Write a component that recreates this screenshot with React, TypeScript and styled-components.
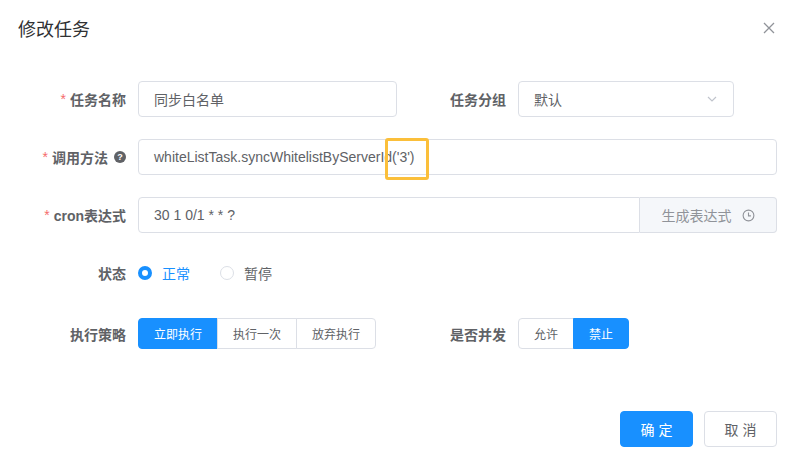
import React, { FC } from 'react';
import styled, { createGlobalStyle } from 'styled-components';

const Global = createGlobalStyle`
  body { margin: 0; background: #fff; font-family: "Liberation Sans", "Noto Sans CJK SC", sans-serif; }
`;

const App: FC = () => {
  return (
    <Dialog>
      <Global />
      <Header>
        <Title>修改任务</Title>
        <Close>
          <svg width="12" height="12" viewBox="0 0 12 12">
            <path d="M1 1L11 11M11 1L1 11" stroke="#909399" strokeWidth="1.3" />
          </svg>
        </Close>
      </Header>
      <Body>
        <Row>
          <Label $required>任务名称</Label>
          <Input $w={259}>同步白名单</Input>
          <Label $w={121}>任务分组</Label>
          <Input $w={216}>
            默认
            <svg width="12" height="12" viewBox="0 0 12 12" style={{ marginLeft: 'auto' }}>
              <path d="M2 4L6 8L10 4" stroke="#c0c4cc" strokeWidth="1.2" fill="none" />
            </svg>
          </Input>
        </Row>
        <Row>
          <Label $required>
            调用方法 <Help>?</Help>
          </Label>
          <Input $grow>
            whiteListTask.syncWhitelistByServerId('3')
            <Highlight />
          </Input>
        </Row>
        <Row>
          <Label $required>cron表达式</Label>
          <Input $grow $append>30 1 0/1 * * ?</Input>
          <Append>
            生成表达式
            <svg width="13" height="13" viewBox="0 0 14 14">
              <circle cx="7" cy="7" r="5.8" stroke="#909399" strokeWidth="1.2" fill="none" />
              <path d="M7 3.8V7.4H9.6" stroke="#909399" strokeWidth="1.2" fill="none" />
            </svg>
          </Append>
        </Row>
        <Row $h={36}>
          <Label>状态</Label>
          <Radio $on>正常</Radio>
          <Radio>暂停</Radio>
        </Row>
        <Row $h={31} $mt={5}>
          <Label>执行策略</Label>
          <Group>
            <SegBtn $on>立即执行</SegBtn>
            <SegBtn>执行一次</SegBtn>
            <SegBtn>放弃执行</SegBtn>
          </Group>
          <Label $w={142}>是否并发</Label>
          <Group>
            <SegBtn>允许</SegBtn>
            <SegBtn $on>禁止</SegBtn>
          </Group>
        </Row>
      </Body>
      <Footer>
        <Btn $primary>确 定</Btn>
        <Btn>取 消</Btn>
      </Footer>
    </Dialog>
  );
};

const Dialog = styled.div`
  width: 793px;
  height: 465px;
  display: flex;
  flex-direction: column;
  box-sizing: border-box;
`;

const Header = styled.div`
  display: flex;
  align-items: center;
  justify-content: space-between;
  padding: 14px 18px 0 18px;
  height: 28px;
`;

const Title = styled.div`
  font-size: 18px;
  color: #303133;
`;

const Close = styled.div`
  display: flex;
`;

const Body = styled.div`
  display: flex;
  flex-direction: column;
  gap: 22px;
  padding: 39px 16px 0 20px;
`;

const Row = styled.div<{ $h?: number; $mt?: number }>`
  display: flex;
  align-items: center;
  height: ${({ $h }) => $h ?? 36}px;
  margin-top: ${({ $mt }) => $mt ?? 0}px;
`;

const Label = styled.div<{ $required?: boolean; $w?: number }>`
  width: ${({ $w }) => $w ?? 118}px;
  box-sizing: border-box;
  padding-right: 12px;
  text-align: right;
  font-size: 14px;
  font-weight: bold;
  color: #606266;
  flex-shrink: 0;
  display: flex;
  justify-content: flex-end;
  align-items: center;
  gap: 4px;
  &::before {
    content: ${({ $required }) => ($required ? "'*'" : 'none')};
    color: #f56c6c;
    font-weight: normal;
  }
`;

const Help = styled.span`
  width: 12px;
  height: 12px;
  border-radius: 50%;
  background: #606266;
  color: #fff;
  font-size: 9px;
  display: inline-flex;
  align-items: center;
  justify-content: center;
  margin-left: 2px;
`;

const Input = styled.div<{ $w?: number; $grow?: boolean; $append?: boolean }>`
  position: relative;
  box-sizing: border-box;
  height: 36px;
  width: ${({ $w }) => ($w ? `${$w}px` : 'auto')};
  flex: ${({ $grow }) => ($grow ? 1 : 'none')};
  border: 1px solid #dcdfe6;
  border-radius: ${({ $append }) => ($append ? '4px 0 0 4px' : '4px')};
  padding: 0 15px;
  display: flex;
  align-items: center;
  font-size: 14px;
  color: #606266;
`;

const Highlight = styled.div`
  position: absolute;
  left: 246px;
  top: -2px;
  width: 38px;
  height: 36px;
  border: 3px solid #fbbf3a;
  border-radius: 3px;
`;

const Append = styled.div`
  box-sizing: border-box;
  height: 36px;
  width: 137px;
  background: #f5f7fa;
  border: 1px solid #dcdfe6;
  border-left: none;
  border-radius: 0 4px 4px 0;
  display: flex;
  align-items: center;
  justify-content: center;
  gap: 10px;
  font-size: 14px;
  color: #909399;
`;

const Radio = styled.div<{ $on?: boolean }>`
  display: flex;
  align-items: center;
  gap: 10px;
  font-size: 14px;
  margin-right: 30px;
  color: ${({ $on }) => ($on ? '#1890ff' : '#606266')};
  &::before {
    content: '';
    box-sizing: border-box;
    width: 14px;
    height: 14px;
    border-radius: 50%;
    border: ${({ $on }) => ($on ? '4px solid #1890ff' : '1px solid #dcdfe6')};
    background: #fff;
  }
`;

const Group = styled.div`
  display: flex;
  height: 31px;
`;

const SegBtn = styled.div<{ $on?: boolean }>`
  box-sizing: border-box;
  height: 31px;
  padding: 0 15px;
  display: flex;
  align-items: center;
  font-size: 12px;
  border: 1px solid ${({ $on }) => ($on ? '#1890ff' : '#dcdfe6')};
  background: ${({ $on }) => ($on ? '#1890ff' : '#fff')};
  color: ${({ $on }) => ($on ? '#fff' : '#606266')};
  & + & { margin-left: -1px; }
  &:first-child { border-radius: 4px 0 0 4px; }
  &:last-child { border-radius: 0 4px 4px 0; }
`;

const Footer = styled.div`
  margin-top: auto;
  display: flex;
  justify-content: flex-end;
  gap: 11px;
  padding: 0 16px 18px 0;
`;

const Btn = styled.div<{ $primary?: boolean }>`
  box-sizing: border-box;
  width: 73px;
  height: 36px;
  border-radius: 4px;
  display: flex;
  align-items: center;
  justify-content: center;
  font-size: 14px;
  background: ${({ $primary }) => ($primary ? '#1890ff' : '#fff')};
  color: ${({ $primary }) => ($primary ? '#fff' : '#606266')};
  border: 1px solid ${({ $primary }) => ($primary ? '#1890ff' : '#dcdfe6')};
`;

export default App;
